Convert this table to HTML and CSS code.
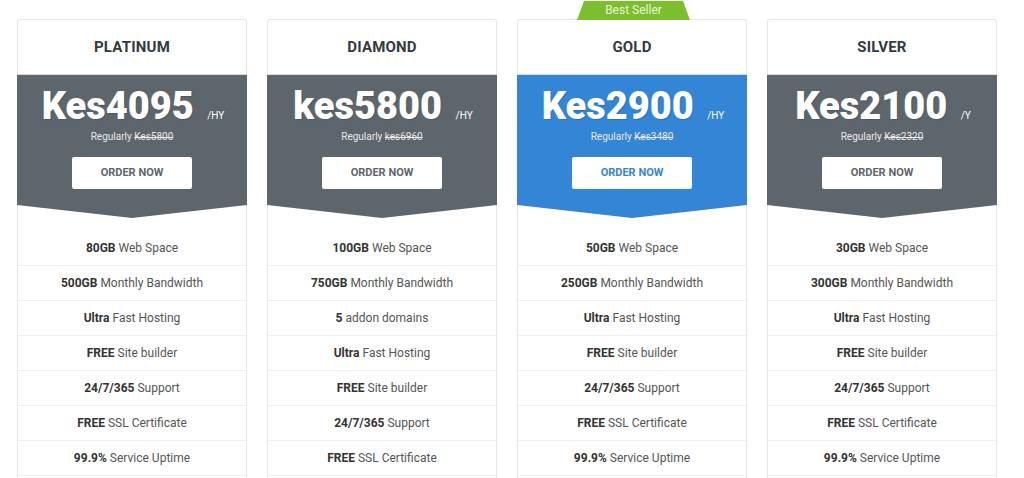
FILE: index.html
```html
<!doctype html>
<html><head>
<meta charset="utf-8">
<title>Hosting Plans</title>
<link rel="stylesheet" href="styles.css">
</head><body>
<div class="plans">
	<div class="plan">
		<div class="plan-head">PLATINUM</div>
		<div class="plan-price">
			<div class="amount">Kes4095 <span class="per">/HY</span></div>
			<div class="regular">Regularly <s>Kes5800</s></div>
			<a class="order" href="#">ORDER NOW</a>
		</div>
		<ul class="features">
			<li><b>80GB</b> Web Space</li>
			<li><b>500GB</b> Monthly Bandwidth</li>
			<li><b>Ultra</b> Fast Hosting</li>
			<li><b>FREE</b> Site builder</li>
			<li><b>24/7/365</b> Support</li>
			<li><b>FREE</b> SSL Certificate</li>
			<li><b>99.9%</b> Service Uptime</li>
		</ul>
	</div>
	<div class="plan">
		<div class="plan-head">DIAMOND</div>
		<div class="plan-price">
			<div class="amount">kes5800 <span class="per">/HY</span></div>
			<div class="regular">Regularly <s>kes6960</s></div>
			<a class="order" href="#">ORDER NOW</a>
		</div>
		<ul class="features">
			<li><b>100GB</b> Web Space</li>
			<li><b>750GB</b> Monthly Bandwidth</li>
			<li><b>5</b> addon domains</li>
			<li><b>Ultra</b> Fast Hosting</li>
			<li><b>FREE</b> Site builder</li>
			<li><b>24/7/365</b> Support</li>
			<li><b>FREE</b> SSL Certificate</li>
		</ul>
	</div>
	<div class="plan featured">
		<div class="badge">Best Seller</div>
		<div class="plan-head">GOLD</div>
		<div class="plan-price">
			<div class="amount">Kes2900 <span class="per">/HY</span></div>
			<div class="regular">Regularly <s>Kes3480</s></div>
			<a class="order" href="#">ORDER NOW</a>
		</div>
		<ul class="features">
			<li><b>50GB</b> Web Space</li>
			<li><b>250GB</b> Monthly Bandwidth</li>
			<li><b>Ultra</b> Fast Hosting</li>
			<li><b>FREE</b> Site builder</li>
			<li><b>24/7/365</b> Support</li>
			<li><b>FREE</b> SSL Certificate</li>
			<li><b>99.9%</b> Service Uptime</li>
		</ul>
	</div>
	<div class="plan">
		<div class="plan-head">SILVER</div>
		<div class="plan-price">
			<div class="amount">Kes2100 <span class="per">/Y</span></div>
			<div class="regular">Regularly <s>Kes2320</s></div>
			<a class="order" href="#">ORDER NOW</a>
		</div>
		<ul class="features">
			<li><b>30GB</b> Web Space</li>
			<li><b>300GB</b> Monthly Bandwidth</li>
			<li><b>Ultra</b> Fast Hosting</li>
			<li><b>FREE</b> Site builder</li>
			<li><b>24/7/365</b> Support</li>
			<li><b>FREE</b> SSL Certificate</li>
			<li><b>99.9%</b> Service Uptime</li>
		</ul>
	</div>
</div>
</body></html>
```

FILE: styles.css
```css
body {
	margin: 0;
	background: #fff;
	font: 12px Roboto, 'Liberation Sans', sans-serif;
	color: #555;
}

.plans {
	display: flex;
	gap: 20px;
	padding: 19px 0 0 17px;
}

.plan {
	position: relative;
	width: 230px;
	box-sizing: border-box;
	border: 1px solid #e6e6e6;
	border-bottom: none;
	border-radius: 3px 3px 0 0;
	background: #fff;
	padding-bottom: 40px;
}

.plan-head {
	height: 54px;
	line-height: 54px;
	text-align: center;
	font-size: 15px;
	font-weight: bold;
	color: #333a40;
	border-bottom: 1px solid #dcdcdc;
	letter-spacing: 0.2px;
}

.plan-price {
	margin: 0 -1px;
	height: 143px;
	background: #5e666d;
	color: #fff;
	text-align: center;
	box-sizing: border-box;
	padding-top: 12px;
	clip-path: polygon(0 0, 100% 0, 100% 130px, 50% 143px, 0 130px);
}

.featured .plan-price {
	background: #3385d6;
}

.amount {
	height: 38px;
	font-size: 38px;
	font-weight: 900;
	line-height: 38px;
	padding-left: 2px;
	text-shadow: 1px 1px 1px rgba(0,0,0,0.15);
}

.per {
	font-size: 10px;
	font-weight: normal;
	line-height: 1;
	margin-left: 4px;
	text-shadow: none;
}

.regular {
	font-size: 10px;
	line-height: 12px;
	color: #e8e8e8;
	margin-top: 6px;
}

.order {
	display: block;
	width: 120px;
	height: 32px;
	line-height: 32px;
	margin: 14px auto 0;
	background: #fff;
	border-radius: 2px;
	color: #5e666d;
	font-size: 11px;
	font-weight: bold;
	text-decoration: none;
}

.featured .order {
	color: #3385d6;
}

.features {
	list-style: none;
	margin: 13px 0 0;
	padding: 0;
}

.features li {
	height: 34px;
	line-height: 34px;
	text-align: center;
	border-bottom: 1px solid #efefef;
}

.features b {
	color: #333;
}

.badge {
	position: absolute;
	top: -19px;
	left: 59px;
	width: 113px;
	height: 19px;
	line-height: 19px;
	text-align: center;
	color: #e8f7d4;
	font-size: 12px;
	background: #7cbf2d;
	clip-path: polygon(7px 0, 106px 0, 113px 19px, 0 19px);
}
```
